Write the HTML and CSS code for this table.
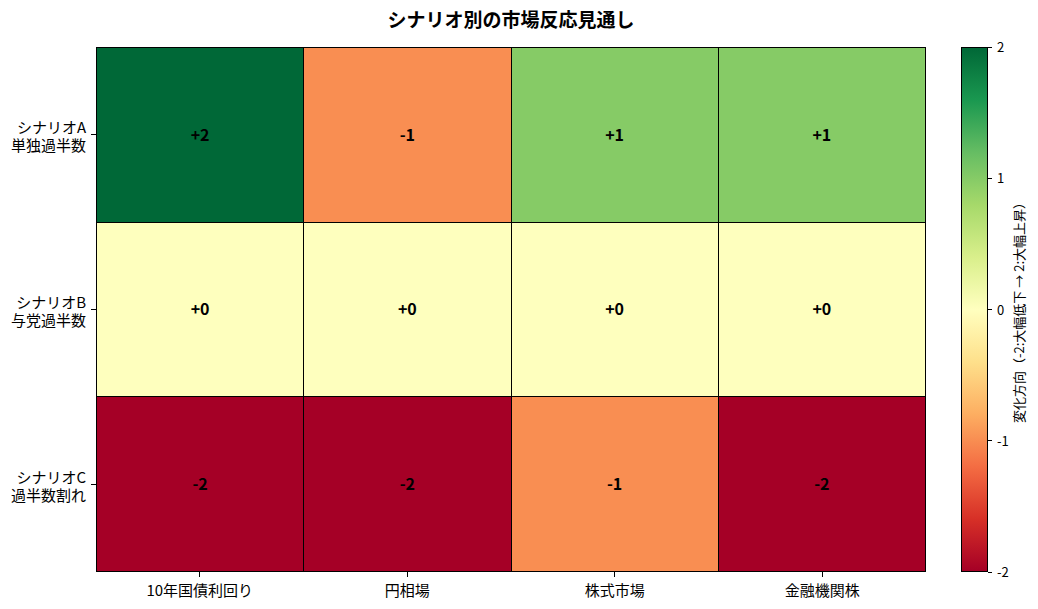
FILE: index.html
```html
<!DOCTYPE html>
<html lang="ja">
<head>
<meta charset="utf-8">
<title>シナリオ別の市場反応見通し</title>
<link rel="stylesheet" href="styles.css">
</head>
<body>
<div class="figure">
  <div class="title">シナリオ別の市場反応見通し</div>

  <div class="ylabels">
    <div class="yrow"><div class="ylabel"><div class="yline">シナリオA</div><div class="yline">単独過半数</div></div><div class="ytick"></div></div>
    <div class="yrow"><div class="ylabel"><div class="yline">シナリオB</div><div class="yline">与党過半数</div></div><div class="ytick"></div></div>
    <div class="yrow"><div class="ylabel"><div class="yline">シナリオC</div><div class="yline">過半数割れ</div></div><div class="ytick"></div></div>
  </div>

  <div class="heatmap">
    <div class="cell v2">+2</div>
    <div class="cell vm1">-1</div>
    <div class="cell v1">+1</div>
    <div class="cell v1">+1</div>
    <div class="cell v0">+0</div>
    <div class="cell v0">+0</div>
    <div class="cell v0">+0</div>
    <div class="cell v0">+0</div>
    <div class="cell vm2">-2</div>
    <div class="cell vm2">-2</div>
    <div class="cell vm1">-1</div>
    <div class="cell vm2">-2</div>
  </div>

  <div class="colorbar"></div>

  <div class="cbar-side">
    <div class="cticks">
      <div class="ctick"><span class="cline"></span><span class="clabel">2</span></div>
      <div class="ctick"><span class="cline"></span><span class="clabel">1</span></div>
      <div class="ctick"><span class="cline"></span><span class="clabel">0</span></div>
      <div class="ctick"><span class="cline"></span><span class="clabel">-1</span></div>
      <div class="ctick"><span class="cline"></span><span class="clabel">-2</span></div>
    </div>
    <div class="clabel-axis">変化方向（-2:大幅低下 → 2:大幅上昇）</div>
  </div>

  <div class="xlabels">
    <div class="xcol"><div class="xtick"></div><div class="xlabel">10年国債利回り</div></div>
    <div class="xcol"><div class="xtick"></div><div class="xlabel">円相場</div></div>
    <div class="xcol"><div class="xtick"></div><div class="xlabel">株式市場</div></div>
    <div class="xcol"><div class="xtick"></div><div class="xlabel">金融機関株</div></div>
  </div>
</div>
</body>
</html>
```

FILE: styles.css
```css
html, body {
  margin: 0;
  padding: 0;
  background: #ffffff;
}

body {
  width: 1038px;
  height: 609px;
  overflow: hidden;
  font-family: "Noto Sans CJK JP", "Noto Sans", sans-serif;
  color: #000;
}

.figure {
  display: grid;
  grid-template-columns: 96px 830px 35px 27px 1fr;
  grid-template-rows: 47px 525px 1fr;
  width: 1038px;
  height: 609px;
}

.title {
  grid-column: 2;
  grid-row: 1;
  text-align: center;
  font-size: 19px;
  font-weight: bold;
  line-height: 24px;
  padding-top: 7px;
}

.ylabels {
  grid-column: 1;
  grid-row: 2;
  display: flex;
  flex-direction: column;
}

.yrow {
  flex: 1;
  display: flex;
  align-items: center;
  justify-content: flex-end;
}

.ylabel {
  display: flex;
  flex-direction: column;
  align-items: flex-end;
  gap: 1px;
  margin-right: 5px;
  padding-top: 2px;
}

.yline {
  font-size: 15px;
  line-height: 17px;
  white-space: nowrap;
}

.ytick {
  width: 5px;
  height: 1px;
  background: #000;
}

.heatmap {
  grid-column: 2;
  grid-row: 2;
  display: grid;
  grid-template-columns: repeat(4, 1fr);
  grid-template-rows: repeat(3, 1fr);
  gap: 1px;
  padding: 1px;
  background: #000;
  box-sizing: border-box;
}

.cell {
  display: flex;
  align-items: center;
  justify-content: center;
  font-size: 16px;
  font-weight: bold;
  padding-bottom: 2px;
}

.v2 { background: #006837; }
.v1 { background: #86cb66; }
.v0 { background: #feffbe; }
.vm1 { background: #f98e52; }
.vm2 { background: #a50026; }

.colorbar {
  grid-column: 4;
  grid-row: 2;
  border: 1px solid #000;
  box-sizing: border-box;
  background: linear-gradient(to top,
    #a50026 0%,
    #d73027 10%,
    #f46d43 20%,
    #fdae61 30%,
    #fee08b 40%,
    #ffffbf 50%,
    #d9ef8b 60%,
    #a6d96a 70%,
    #66bd63 80%,
    #1a9850 90%,
    #006837 100%);
}

.cbar-side {
  grid-column: 5;
  grid-row: 2;
  display: flex;
}

.cticks {
  width: 24px;
  display: flex;
  flex-direction: column;
  justify-content: space-between;
}

.ctick {
  height: 0;
  display: flex;
  align-items: center;
}

.cline {
  width: 4px;
  height: 1px;
  background: #000;
}

.clabel {
  font-size: 13px;
  line-height: 16px;
  margin-left: 5px;
}

.clabel-axis {
  align-self: center;
  writing-mode: vertical-rl;
  text-orientation: sideways;
  transform: rotate(180deg);
  font-size: 13px;
  line-height: 14px;
  white-space: nowrap;
}

.xlabels {
  grid-column: 2;
  grid-row: 3;
  display: grid;
  grid-template-columns: repeat(4, 1fr);
  align-items: start;
}

.xcol {
  display: flex;
  flex-direction: column;
  align-items: center;
}

.xtick {
  width: 1px;
  height: 5px;
  background: #000;
}

.xlabel {
  font-size: 15px;
  line-height: 18px;
  margin-top: 4px;
  white-space: nowrap;
}
```
